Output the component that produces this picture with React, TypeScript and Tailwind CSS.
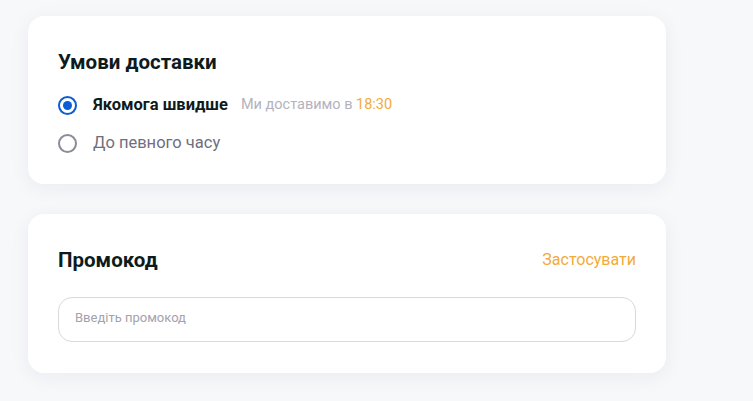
import React, { useState } from 'react'

const font = { fontFamily: 'Roboto, "Noto Sans", sans-serif' }

const Radio = ({ checked }: { checked: boolean }) => (
  <span
    className={`flex h-[19px] w-[19px] shrink-0 items-center justify-center rounded-full border-2 ${
      checked ? 'border-[#0b5cd5]' : 'border-[#8c8b97]'
    }`}
  >
    {checked && <span className="h-[9px] w-[9px] rounded-full bg-[#0b5cd5]" />}
  </span>
)

export default function App() {
  const [mode, setMode] = useState<'fast' | 'time'>('fast')

  return (
    <div className="min-h-[401px] w-full bg-[#f7f8fa] pt-4 pl-7" style={font}>
      <div className="flex w-[638px] flex-col gap-[30px]">
        <div className="rounded-2xl bg-white px-[30px] pt-[32px] pb-[31px] shadow-[0_4px_20px_rgba(20,30,60,0.06)]">
          <h2 className="text-[20.5px] leading-7 font-bold text-[#0e1b1c]">Умови доставки</h2>
          <div className="mt-[19px] flex flex-col gap-[18px]">
            <button className="flex items-center gap-4 text-left" onClick={() => setMode('fast')}>
              <Radio checked={mode === 'fast'} />
              <span className="text-[16.5px] leading-5 font-bold text-[#0e1b1c]">Якомога швидше</span>
              <span className="-ml-[3px] text-[14.5px] leading-5 text-[#b4b2bd]">
                Ми доставимо в <span className="text-[#f2ab3a]">18:30</span>
              </span>
            </button>
            <button className="flex items-center gap-4 text-left" onClick={() => setMode('time')}>
              <Radio checked={mode === 'time'} />
              <span className="text-[16.5px] leading-5 text-[#6f6e7c]">До певного часу</span>
            </button>
          </div>
        </div>

        <div className="rounded-2xl bg-white px-[30px] pt-[32px] pb-[31px] shadow-[0_4px_20px_rgba(20,30,60,0.06)]">
          <div className="flex items-center justify-between">
            <h2 className="text-[20.5px] leading-7 font-bold text-[#0e1b1c]">Промокод</h2>
            <button className="text-[16px] leading-5 text-[#f2ab3a]">Застосувати</button>
          </div>
          <input
            className="mt-[23px] h-[45px] w-full rounded-[14px] border border-[#d9d8de] px-4 pb-[4px] text-[13px] text-[#333] outline-none placeholder:text-[#a3a2ae]"
            placeholder="Введіть промокод"
            style={font}
          />
        </div>
      </div>
    </div>
  )
}
